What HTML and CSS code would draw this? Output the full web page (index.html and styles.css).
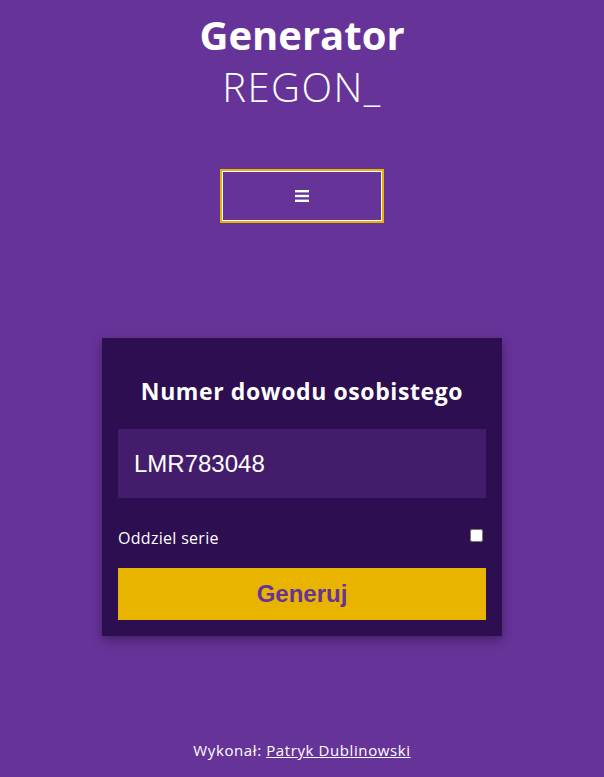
FILE: index.html
```html
<!DOCTYPE html>
<html lang="pl">
<head>
<meta charset="utf-8">
<title>Generator REGON</title>
<link rel="stylesheet" href="styles.css">
</head>
<body>
<header class="header">
  <h1 class="title"><span class="title-main">Generator</span><span class="title-sub">REGON_</span></h1>
  <button class="menu-btn" aria-label="menu">
    <svg width="14" height="12" viewBox="0 0 14 12"><rect x="0" y="0" width="14" height="2.4" fill="#fff"/><rect x="0" y="4.8" width="14" height="2.4" fill="#fff"/><rect x="0" y="9.6" width="14" height="2.4" fill="#fff"/></svg>
  </button>
</header>
<main class="main">
  <section class="card">
    <h2 class="card-title">Numer dowodu osobistego</h2>
    <div class="result">LMR783048</div>
    <label class="option"><span>Oddziel serie</span><input type="checkbox" class="check"></label>
    <button class="generate">Generuj</button>
  </section>
</main>
<footer class="footer">Wykonał: <a href="#" class="author">Patryk Dublinowski</a></footer>
</body>
</html>
```
FILE: styles.css
```css
html, body {
  margin: 0;
  padding: 0;
}
body {
  background: #663399;
  color: #fff;
  font-family: "Open Sans", "DejaVu Sans", sans-serif;
  height: 777px;
  display: flex;
  flex-direction: column;
  align-items: center;
}
.header {
  display: flex;
  flex-direction: column;
  align-items: center;
}
.title {
  margin: 12px 0 0;
  display: flex;
  flex-direction: column;
  align-items: center;
  font-weight: 400;
}
.title-main {
  font-size: 40px;
  font-weight: 700;
  line-height: 46px;
}
.title-sub {
  margin-top: 6px;
  font-size: 40px;
  font-weight: 300;
  letter-spacing: 1.5px;
  line-height: 46px;
}
.menu-btn {
  margin-top: 61px;
  width: 160px;
  height: 50px;
  background: transparent;
  border: 1px solid #fff;
  outline: 2px solid #e8b400;
  display: flex;
  align-items: center;
  justify-content: center;
  padding: 0;
}
.main {
  margin-top: 117px;
}
.card {
  width: 400px;
  box-sizing: border-box;
  background: #2c0e51;
  padding: 28px 16px 16px;
  box-shadow: 0 4px 10px rgba(0,0,0,0.35);
  display: flex;
  flex-direction: column;
}
.card-title {
  text-align: center;
  font-size: 23px;
  letter-spacing: 0.6px;
  font-weight: 700;
  line-height: 50px;
  height: 50px;
  margin: 0 0 13px;
}
.result {
  height: 69px;
  background: #431c6c;
  display: flex;
  align-items: center;
  padding-left: 16px;
  font-family: "Liberation Sans", Arial, sans-serif;
  font-size: 24px;
}
.option {
  display: flex;
  justify-content: space-between;
  align-items: center;
  margin-top: 29px;
  height: 22px;
  font-size: 16px;
  letter-spacing: 0.3px;
}
.check {
  margin: 0 3px -2px 0;
  width: 13px;
  height: 13px;
  position: relative;
  top: -4px;
}
.generate {
  margin-top: 19px;
  height: 52px;
  border: none;
  background: #e8b400;
  color: #663399;
  font-family: "Liberation Sans", Arial, sans-serif;
  font-weight: 700;
  font-size: 24px;
}
.footer {
  margin-top: auto;
  margin-bottom: 17px;
  font-size: 15px;
  letter-spacing: 0.6px;
}
.author {
  color: #fff;
}
```
